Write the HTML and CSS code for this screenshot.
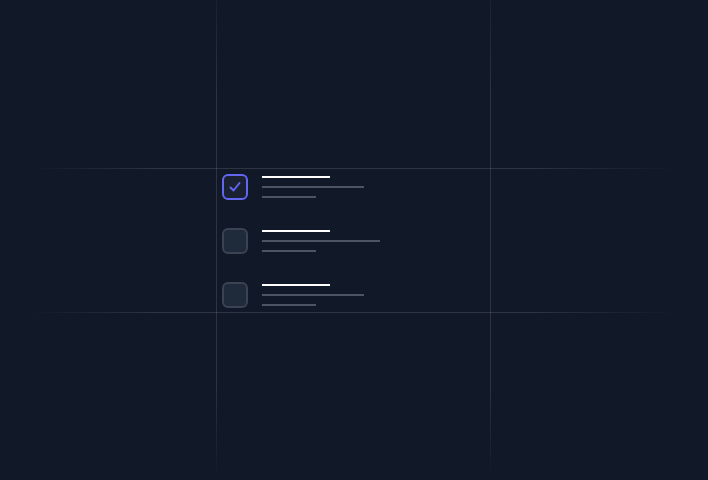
FILE: index.html
```html
<!DOCTYPE html>
<html>
<head>
<meta charset="utf-8">
<link rel="stylesheet" href="styles.css">
</head>
<body>
<div class="stage">
  <div class="hline hline-top"></div>
  <div class="hline hline-bottom"></div>
  <div class="vline vline-left"></div>
  <div class="vline vline-right"></div>
  <ul class="list">
    <li class="item">
      <span class="box box-checked">
        <svg width="26" height="26" viewBox="0 0 26 26"><path d="M8.5 13.5 L11.5 16.5 L17.5 9" fill="none" stroke="#6366f1" stroke-width="2" stroke-linecap="round" stroke-linejoin="round"/></svg>
      </span>
      <div class="lines">
        <span class="bar bar-title"></span>
        <span class="bar bar-sub" style="width:102px"></span>
        <span class="bar bar-sub" style="width:54px"></span>
      </div>
    </li>
    <li class="item">
      <span class="box"></span>
      <div class="lines">
        <span class="bar bar-title"></span>
        <span class="bar bar-sub" style="width:118px"></span>
        <span class="bar bar-sub" style="width:54px"></span>
      </div>
    </li>
    <li class="item">
      <span class="box"></span>
      <div class="lines">
        <span class="bar bar-title"></span>
        <span class="bar bar-sub" style="width:102px"></span>
        <span class="bar bar-sub" style="width:54px"></span>
      </div>
    </li>
  </ul>
</div>
</body>
</html>
```
FILE: styles.css
```css
html, body {
  margin: 0;
  padding: 0;
  background: #111827;
  font-family: "Inter", "Liberation Sans", sans-serif;
}
.stage {
  position: relative;
  width: 708px;
  height: 480px;
  overflow: hidden;
  background: #111827;
}
.hline {
  position: absolute;
  left: 0;
  width: 708px;
  height: 1px;
  background: linear-gradient(to right, rgba(255,255,255,0) 4%, rgba(255,255,255,0.12) 22%, rgba(255,255,255,0.12) 75%, rgba(255,255,255,0) 96%);
}
.hline-top { top: 168px; }
.hline-bottom { top: 312px; }
.vline {
  position: absolute;
  top: 0;
  width: 1px;
  height: 480px;
  background: linear-gradient(to bottom, rgba(255,255,255,0.04) 0%, rgba(255,255,255,0.12) 20%, rgba(255,255,255,0.12) 80%, rgba(255,255,255,0) 100%);
}
.vline-left { left: 216px; }
.vline-right { left: 490px; }
.list {
  list-style: none;
  margin: 0;
  padding: 174px 0 0 222px;
  display: flex;
  flex-direction: column;
  gap: 28px;
}
.item {
  display: flex;
  align-items: flex-start;
  gap: 14px;
}
.box {
  box-sizing: border-box;
  width: 26px;
  height: 26px;
  border: 2px solid #3b4352;
  border-radius: 6px;
  background: #1f2a3b;
  display: flex;
  align-items: center;
  justify-content: center;
  flex: none;
}
.box svg {
  display: block;
  flex: none;
  margin: -2px;
}
.box-checked {
  border-color: #6366f1;
  background: #1a2133;
}
.lines {
  display: flex;
  flex-direction: column;
  gap: 8px;
  padding-top: 2px;
}
.bar {
  display: block;
  height: 2px;
}
.bar-title {
  width: 68px;
  background: #ffffff;
}
.bar-sub {
  background: #4b5563;
}
```
